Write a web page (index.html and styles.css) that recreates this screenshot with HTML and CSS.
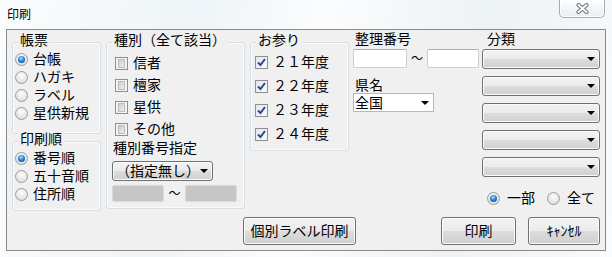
FILE: index.html
```html
<!doctype html>
<html>
<head>
<meta charset="utf-8">
<link rel="stylesheet" href="styles.css">
<title>印刷</title>
</head>
<body>
<div class="window">
  <div class="titlebar">
    <span class="title">印刷</span>
    <button class="close" type="button">
      <svg width="13" height="11" viewBox="0 0 13 11">
        <path d="M2.5 2 L10.5 9 M10.5 2 L2.5 9" stroke="#6b737c" stroke-width="4" stroke-linecap="round"/>
        <path d="M2.5 2 L10.5 9 M10.5 2 L2.5 9" stroke="#fff" stroke-width="2" stroke-linecap="round"/>
      </svg>
    </button>
  </div>

  <div class="client">
    <div class="cols">
      <div class="col col-1">
        <div class="group group-form">
          <div class="group-title">帳票</div>
          <div class="opts">
            <div class="opt"><span class="radio on"></span>台帳</div>
            <div class="opt"><span class="radio"></span>ハガキ</div>
            <div class="opt"><span class="radio"></span>ラベル</div>
            <div class="opt"><span class="radio"></span>星供新規</div>
          </div>
        </div>
        <div class="group group-order">
          <div class="group-title">印刷順</div>
          <div class="opts">
            <div class="opt"><span class="radio on"></span>番号順</div>
            <div class="opt"><span class="radio"></span>五十音順</div>
            <div class="opt"><span class="radio"></span>住所順</div>
          </div>
        </div>
      </div>

      <div class="col col-2">
        <div class="group group-kind">
          <div class="group-title">種別（全て該当）</div>
          <div class="opts">
            <div class="opt"><span class="check"></span>信者</div>
            <div class="opt"><span class="check"></span>檀家</div>
            <div class="opt"><span class="check"></span>星供</div>
            <div class="opt"><span class="check"></span>その他</div>
          </div>
          <div class="field-label">種別番号指定</div>
          <div class="combo combo-kind"><span>（指定無し）</span><span class="arrow"></span></div>
          <div class="range">
            <span class="edit disabled"></span><span class="tilde">～</span><span class="edit disabled"></span>
          </div>
        </div>
      </div>

      <div class="col col-3">
        <div class="group group-visit">
          <div class="group-title">お参り</div>
          <div class="opts">
            <div class="opt"><span class="check on"><svg width="11" height="11" viewBox="0 0 11 11"><path d="M2 5.5 L4.5 8 L9 2" fill="none" stroke="#23479a" stroke-width="2"/></svg></span>２１年度</div>
            <div class="opt"><span class="check on"><svg width="11" height="11" viewBox="0 0 11 11"><path d="M2 5.5 L4.5 8 L9 2" fill="none" stroke="#23479a" stroke-width="2"/></svg></span>２２年度</div>
            <div class="opt"><span class="check on"><svg width="11" height="11" viewBox="0 0 11 11"><path d="M2 5.5 L4.5 8 L9 2" fill="none" stroke="#23479a" stroke-width="2"/></svg></span>２３年度</div>
            <div class="opt"><span class="check on"><svg width="11" height="11" viewBox="0 0 11 11"><path d="M2 5.5 L4.5 8 L9 2" fill="none" stroke="#23479a" stroke-width="2"/></svg></span>２４年度</div>
          </div>
        </div>
      </div>

      <div class="col col-4">
        <div class="field-label">整理番号</div>
        <div class="range range-number">
          <span class="edit"></span><span class="tilde">～</span><span class="edit"></span>
        </div>
        <div class="field-label pref-label">県名</div>
        <div class="combo combo-pref"><span>全国</span><span class="arrow"></span></div>
      </div>

      <div class="col col-5">
        <div class="field-label">分類</div>
        <div class="combo-list">
          <div class="combo"><span></span><span class="arrow"></span></div>
          <div class="combo"><span></span><span class="arrow"></span></div>
          <div class="combo"><span></span><span class="arrow"></span></div>
          <div class="combo"><span></span><span class="arrow"></span></div>
          <div class="combo"><span></span><span class="arrow"></span></div>
        </div>
        <div class="scope">
          <div class="opt"><span class="radio on"></span>一部</div>
          <div class="opt"><span class="radio"></span>全て</div>
        </div>
      </div>
    </div>

    <div class="actions">
      <button class="btn btn-label" type="button">個別ラベル印刷</button>
      <button class="btn btn-print" type="button">印刷</button>
      <button class="btn btn-cancel" type="button">ｷｬﾝｾﾙ</button>
    </div>
  </div>
</div>
</body>
</html>
```

FILE: styles.css
```css
* {
    box-sizing: border-box;
}
body {
    margin: 0;
    font-family: "Liberation Sans", "Noto Sans CJK JP", sans-serif;
    font-size: 14px;
    line-height: 16px;
    color: #000;
    background: #fff;
}
.window {
    width: 612px;
    height: 257px;
    display: flex;
    flex-direction: column;
    padding: 0 6px 6px;
    background: linear-gradient(100deg, #fbfcfd 0%, #eef4f7 30%, #fbfcfd 50%, #edf2f5 75%, #f8fafc 100%);
}

/* title bar */
.titlebar {
    height: 29px;
    flex: none;
    display: flex;
    justify-content: space-between;
    align-items: flex-start;
}
.title {
    font-size: 12px;
    line-height: 14px;
    margin: 8px 0 0 1px;
}
.close {
    width: 46px;
    height: 18px;
    margin-right: 1px;
    padding: 0;
    border: 1px solid #a3adb8;
    border-top: none;
    border-radius: 0 0 5px 5px;
    background: linear-gradient(#fdfdfe, #e9edf1);
    box-shadow: inset 0 0 0 1px rgba(255,255,255,0.8);
    display: flex;
    align-items: center;
    justify-content: center;
}

/* client area */
.client {
    flex: 1;
    display: flex;
    flex-direction: column;
    border: 1px solid #8a8a8a;
    background: #f0f0f0;
}
.cols {
    flex: 1;
    display: flex;
    align-items: flex-start;
    padding: 1px 0 0 5px;
}
.col {
    display: flex;
    flex-direction: column;
}
.col-1 { width: 89px; }
.col-2 { width: 139px; margin-left: 5px; }
.col-3 { width: 99px; margin-left: 5px; }
.col-4 { width: 126px; margin-left: 4px; }
.col-5 { width: 118px; margin-left: 3px; }

/* group boxes */
.group {
    display: flex;
    flex-direction: column;
    border: 1px solid #d5dfe5;
    border-radius: 3px;
    box-shadow: inset 0 0 0 1px #fafbfc;
}
.group-title {
    align-self: flex-start;
    margin: -11px 0 0 5px;
    padding: 0 2px;
    background: #f0f0f0;
}
.group-form {
    margin-top: 11px;
    padding-bottom: 11px;
}
.group-order {
    margin-top: 7px;
    padding-bottom: 7px;
}
.group-kind {
    margin-top: 11px;
    padding-bottom: 6px;
}
.group-visit {
    margin-top: 11px;
    padding-bottom: 4px;
}
.opts {
    margin-top: 2px;
    padding-left: 2px;
}
.opt {
    display: flex;
    align-items: center;
    height: 18px;
    white-space: nowrap;
}
.group-kind .opts {
    margin-top: 4px;
    padding-left: 8px;
}
.group-kind .opt {
    height: 22px;
}
.group-visit .opts {
    padding-left: 4px;
}
.group-visit .opt {
    height: 24px;
}

/* radio and check */
.radio {
    flex: none;
    width: 13px;
    height: 13px;
    margin-right: 5px;
    border-radius: 50%;
    border: 1px solid #9a9c9e;
    background: radial-gradient(circle at 50% 35%, #fdfdfd, #dcdcdc 85%);
    display: flex;
    align-items: center;
    justify-content: center;
}
.radio.on::after {
    content: "";
    width: 7px;
    height: 7px;
    border-radius: 50%;
    background: radial-gradient(circle at 45% 35%, #a8e4ff 0%, #2a82d6 45%, #0b3c86 100%);
}
.check {
    flex: none;
    width: 13px;
    height: 13px;
    margin-right: 5px;
    border: 1px solid #8e8f8f;
    padding: 2px;
    background: #f4f4f4;
    display: flex;
    align-items: center;
    justify-content: center;
}
.check::before {
    content: "";
    width: 100%;
    height: 100%;
    border: 1px solid #b8bcc1;
    background: linear-gradient(135deg, #c9ccd1, #eeeff0);
}
.check.on {
    padding: 0;
    background: linear-gradient(135deg, #e2e4e7, #fbfbfb);
}
.check.on::before {
    display: none;
}

/* fields */
.field-label {
    padding-left: 6px;
    white-space: nowrap;
}
.combo {
    height: 20px;
    display: flex;
    align-items: center;
    justify-content: space-between;
    padding: 0 4px 0 3px;
    border: 1px solid #707070;
    border-radius: 3px;
    background: linear-gradient(#f2f2f2 0%, #ebebeb 50%, #dddddd 50%, #cfcfcf 100%);
    box-shadow: inset 0 0 0 1px #fbfbfb;
    white-space: nowrap;
}
.arrow {
    width: 0;
    height: 0;
    border-left: 4px solid transparent;
    border-right: 4px solid transparent;
    border-top: 4px solid #000;
}
.combo-kind {
    width: 101px;
    margin: 5px 0 0 5px;
}
.range {
    display: flex;
    align-items: center;
}
.group-kind .range {
    margin: 4px 0 0 5px;
}
.edit {
    height: 17px;
    width: 52px;
    border: 1px solid #c9ced5;
    border-top-color: #abadb3;
    border-radius: 2px;
    background: #fff;
}
.edit.disabled {
    background: #c6c6c6;
    border-color: #dadada;
}
.tilde {
    width: 21px;
    text-align: center;
    font-size: 12px;
    line-height: 14px;
}

/* right columns */
.col-4 .field-label {
    padding-left: 2px;
}
.range-number {
    margin-top: 2px;
}
.range-number .edit {
    height: 19px;
}
.range-number .edit:first-child {
    width: 54px;
}
.range-number .tilde {
    width: 20px;
}
.pref-label {
    margin-top: 9px;
}
.combo-pref {
    width: 81px;
    height: 19px;
    padding: 0 4px 0 1px;
    border: 1px solid #b5b9bf;
    border-radius: 0;
    background: #fff;
    box-shadow: none;
}
.col-5 .field-label {
    padding-left: 5px;
}
.combo-list {
    margin-top: 2px;
    display: flex;
    flex-direction: column;
    gap: 7px;
}
.scope {
    display: flex;
    margin-top: 12px;
    padding-left: 5px;
}
.scope .radio {
    margin-right: 7px;
}
.scope .opt + .opt {
    margin-left: 12px;
}

/* buttons */
.actions {
    flex: none;
    display: flex;
    padding: 0 5px 5px 236px;
}
.btn {
    height: 28px;
    padding: 0;
    font: inherit;
    color: #000;
    border: 1px solid #707070;
    border-radius: 3px;
    background: linear-gradient(#f2f2f2 0%, #ebebeb 50%, #dddddd 50%, #cfcfcf 100%);
    box-shadow: inset 0 0 0 1px #fcfcfc;
}
.btn-label {
    width: 113px;
}
.btn-print {
    width: 75px;
    margin-left: auto;
}
.btn-cancel {
    width: 72px;
    margin-left: 12px;
}
```
